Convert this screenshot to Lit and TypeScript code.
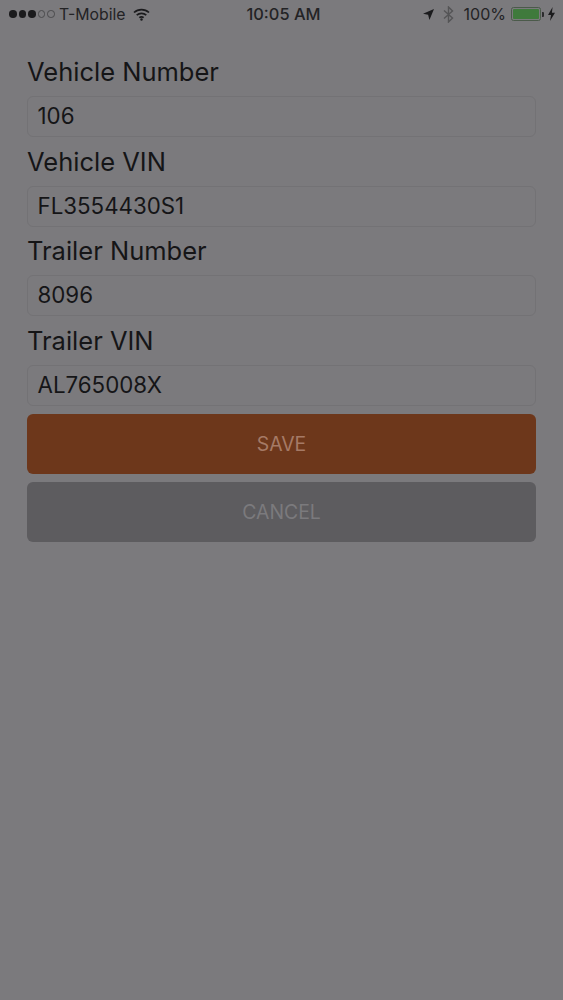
import { LitElement, html, css } from "lit";
import { customElement } from "lit/decorators.js";

const fields = [
  ["Vehicle Number", "106"],
  ["Vehicle VIN", "FL3554430S1"],
  ["Trailer Number", "8096"],
  ["Trailer VIN", "AL765008X"],
];

@customElement("app-root")
export class AppRoot extends LitElement {
  static styles = css`
    :host {
      display: block;
      width: 563px;
      height: 1000px;
      background: #7b7a7d;
      font-family: Inter, "Liberation Sans", Arial, sans-serif;
      color: #151517;
      overflow: hidden;
    }
    .status {
      display: flex;
      align-items: center;
      height: 28px;
      padding: 0 8px 0 9px;
      box-sizing: border-box;
      font-size: 15.8px;
      color: #232325;
      position: relative;
    }
    .left, .right { display: flex; align-items: center; }
    .right { margin-left: auto; }
    .dots { display: flex; gap: 2px; margin-right: 4.5px; }
    .dot { width: 7.5px; height: 7.5px; border-radius: 50%; background: #1b1b1d; box-sizing: border-box; }
    .dot.off { background: none; border: 1px solid #4a4a4c; }
    .wifi { margin-left: 7.5px; }
    .time {
      position: absolute;
      left: 0;
      right: 0;
      top: 0;
      line-height: 28px;
      text-align: center;
      font-size: 16.4px;
      font-weight: 500;
      padding-left: 4px;
    }
    .loc { margin-right: 9px; }
    .bt { margin-right: 9.5px; }
    .pct { font-size: 16px; }
    .batt { display: flex; align-items: center; margin-left: 4.5px; margin-right: 4.5px; }
    .shell { width: 30px; height: 14px; border: 1px solid #4b5a4a; border-radius: 2.5px; padding: 1px; box-sizing: border-box; }
    .fill { height: 100%; background: #3f7a3c; border-radius: 1px; }
    .nub { width: 2px; height: 5px; background: #2c2c2e; border-radius: 0 1px 1px 0; margin-left: 1px; }
    form {
      display: flex;
      flex-direction: column;
      padding: 29px 27px 0 27px;
    }
    .label {
      font-size: 25.5px;
      line-height: 30px;
      height: 30px;
      margin-top: 9.67px;
      margin-bottom: 9px;
    }
    .field:first-child .label { margin-top: 0; }
    .input {
      height: 41px;
      box-sizing: border-box;
      border: 1px solid #737275;
      border-radius: 6px;
      padding-left: 9.5px;
      font-size: 22.3px;
      line-height: 37px;
    }
    .btn {
      height: 60px;
      box-sizing: border-box;
      padding-top: 1px;
      border-radius: 6px;
      display: flex;
      align-items: center;
      justify-content: center;
      font-size: 19.4px;
      margin-top: 8px;
    }
    .save { background: #6d371b; color: #a57a66; }
    .cancel { background: #5d5c5f; color: #7b7a7d; }
  `;

  render() {
    return html`
      <div class="status">
        <div class="left">
          <div class="dots">
            <span class="dot"></span><span class="dot"></span><span class="dot"></span>
            <span class="dot off"></span><span class="dot off"></span>
          </div>
          <span>T-Mobile</span>
          <svg class="wifi" width="17" height="13" viewBox="0 0 17 13" fill="none" stroke="#1b1b1d" stroke-width="1.7">
            <path d="M1 4.5C5.2.6 11.8.6 16 4.5"/>
            <path d="M3.7 7.2c2.7-2.4 6.9-2.4 9.6 0"/>
            <path d="M6.3 9.7c1.3-1 3.1-1 4.4 0"/>
            <circle cx="8.5" cy="11.5" r="1.2" fill="#1b1b1d" stroke="none"/>
          </svg>
        </div>
        <div class="time">10:05 AM</div>
        <div class="right">
          <svg class="loc" width="11" height="11" viewBox="0 0 12 12"><path d="M12 0 0 5.2l5.6 1.1L7 12z" fill="#1b1b1d"/></svg>
          <svg class="bt" width="11" height="17" viewBox="0 0 11 17" fill="none" stroke="#545456" stroke-width="1.4">
            <path d="M1 4.5 9.5 12 5.5 16V1L9.5 5 1 12.5"/>
          </svg>
          <span class="pct">100%</span>
          <div class="batt"><div class="shell"><div class="fill"></div></div><div class="nub"></div></div>
          <svg width="7" height="14" viewBox="0 0 7 14"><path d="M4.6 0 0 8h3l-1 6 5-8.3H3.9z" fill="#1b1b1d"/></svg>
        </div>
      </div>
      <form>
        ${fields.map(([l, v]) => html`
          <div class="field">
            <div class="label">${l}</div>
            <div class="input">${v}</div>
          </div>`)}
        <div class="btn save">SAVE</div>
        <div class="btn cancel">CANCEL</div>
      </form>
    `;
  }
}
